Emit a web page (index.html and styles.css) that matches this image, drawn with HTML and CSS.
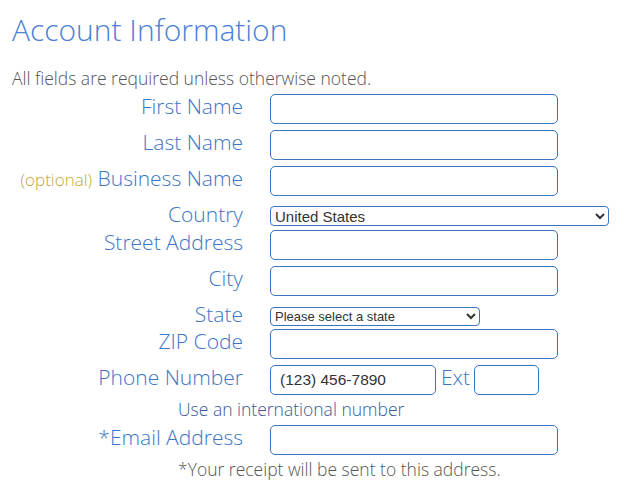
FILE: index.html
```html
<!DOCTYPE html>
<html lang="en">
<head>
<meta charset="utf-8">
<title>Account Information</title>
<link rel="stylesheet" href="styles.css">
</head>
<body>
<div class="page">
  <h1 class="title">Account Information</h1>
  <p class="note">All fields are required unless otherwise noted.</p>
  <form class="form">
    <div class="row">
      <label class="lbl">First Name</label>
      <input class="field" type="text">
    </div>
    <div class="row">
      <label class="lbl">Last Name</label>
      <input class="field" type="text">
    </div>
    <div class="row">
      <label class="lbl"><span class="optional">(optional)</span> Business Name</label>
      <input class="field" type="text">
    </div>
    <div class="row row-select">
      <label class="lbl">Country</label>
      <select class="pick pick-country"><option>United States</option></select>
    </div>
    <div class="row row-after-select">
      <label class="lbl">Street Address</label>
      <input class="field" type="text">
    </div>
    <div class="row">
      <label class="lbl">City</label>
      <input class="field" type="text">
    </div>
    <div class="row row-select">
      <label class="lbl">State</label>
      <select class="pick pick-state"><option>Please select a state</option></select>
    </div>
    <div class="row row-zip">
      <label class="lbl">ZIP Code</label>
      <input class="field" type="text">
    </div>
    <div class="row">
      <label class="lbl">Phone Number</label>
      <div class="phone">
        <input class="field field-phone" type="text" value="(123) 456-7890">
        <span class="ext">Ext</span>
        <input class="field field-ext" type="text">
      </div>
    </div>
    <p class="help help-phone">Use an international number</p>
    <div class="row row-email">
      <label class="lbl">*Email Address</label>
      <input class="field" type="text">
    </div>
    <p class="help help-email">*Your receipt will be sent to this address.</p>
  </form>
</div>
</body>
</html>
```

FILE: styles.css
```css
html, body {
  margin: 0;
  padding: 0;
  background: #ffffff;
}

.page {
  padding: 10px 12px 0 12px;
  font-family: "Open Sans", "Liberation Sans", sans-serif;
  font-weight: 300;
}

.title {
  margin: 0;
  font-size: 30px;
  line-height: 40px;
  font-weight: 300;
  color: #4a80d6;
}

.note {
  margin: 17px 0 0 0;
  font-size: 17.5px;
  line-height: 22px;
  color: #555555;
}

.form {
  margin-top: 5px;
  display: flex;
  flex-direction: column;
}

.row {
  display: grid;
  grid-template-columns: 231px 1fr;
  column-gap: 27px;
  align-items: start;
  margin-top: 6px;
}

.row:first-child {
  margin-top: 0;
}

.lbl {
  text-align: right;
  font-size: 21px;
  line-height: 24px;
  color: #3c74c6;
  white-space: nowrap;
}

.optional {
  font-size: 17px;
  color: #c8a43c;
}

.field {
  box-sizing: border-box;
  width: 288px;
  height: 30px;
  margin: 0;
  border: 1px solid #3a74c0;
  border-radius: 5px;
  padding: 0 9px;
  background: #ffffff;
  font-family: "Liberation Sans", Arial, sans-serif;
  font-size: 15.5px;
  color: #333333;
  outline: none;
}

.row-select {
  height: 24px;
  align-items: end;
}

.pick {
  box-sizing: border-box;
  margin: 0;
  border: 1px solid #3a74c0;
  border-radius: 4px;
  background: #ffffff;
  font-family: "Liberation Sans", Arial, sans-serif;
  color: #333333;
  padding: 0;
}

.pick-country {
  width: 339px;
  height: 20px;
  font-size: 15px;
}

.pick-state {
  width: 210px;
  height: 19px;
  font-size: 13px;
}

.row-after-select {
  margin-top: 4px;
}

.row-zip {
  margin-top: 3px;
}

.phone {
  display: flex;
  align-items: flex-start;
}

.field-phone {
  width: 166px;
}

.ext {
  margin: 0 4px 0 5px;
  font-size: 21px;
  line-height: 24px;
  color: #3c74c6;
}

.field-ext {
  width: 65px;
}

.help {
  margin: 0;
  padding-left: 166px;
  font-size: 17.5px;
  line-height: 22px;
  color: #555555;
}

.help-phone {
  margin-top: 3px;
  color: #3a5a9a;
}

.row-email {
  margin-top: 5px;
}

.help-email {
  margin-top: 3px;
  color: #555555;
}
```
